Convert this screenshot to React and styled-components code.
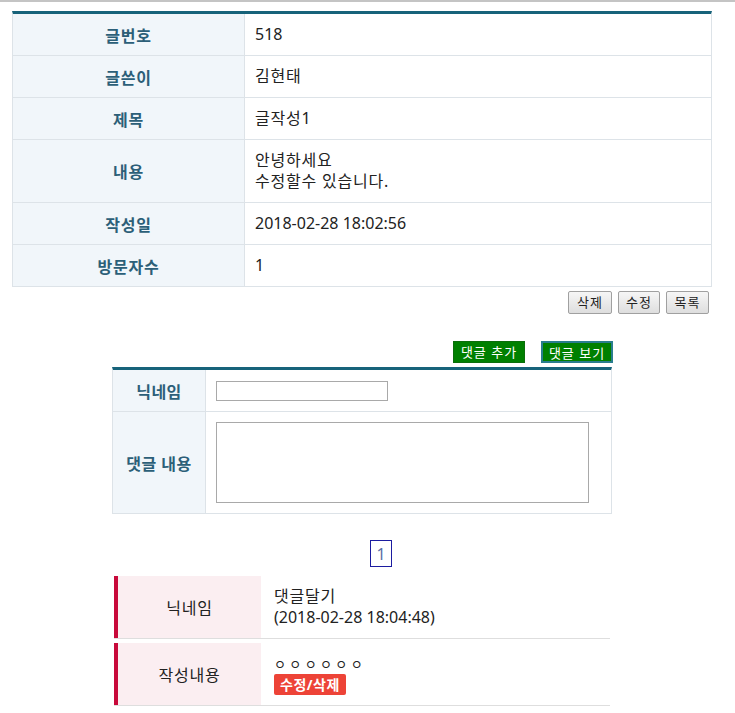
import React from 'react';
import styled, { createGlobalStyle } from 'styled-components';

const GlobalStyle = createGlobalStyle`
    body {
        margin: 0;
        background: #ffffff;
        font-family: "Noto Sans", "Noto Sans CJK KR", sans-serif;
        color: #222222;
    }
    button, input, textarea {
        font-family: "Noto Sans", "Noto Sans CJK KR", sans-serif;
    }
`;

const post = [
    { label: '글번호', value: '518' },
    { label: '글쓴이', value: '김현태', ko: true },
    { label: '제목', value: '글작성1', ko: true },
    { label: '내용', value: ['안녕하세요', '수정할수 있습니다.'], tall: true, ko: true },
    { label: '작성일', value: '2018-02-28 18:02:56' },
    { label: '방문자수', value: '1' },
];

const App = () => {
    return (
        <>
            <GlobalStyle />
            <TopLine />
            <StWrapper>
                <DetailTable>
                    {post.map((row) => (
                        <DetailRow key={row.label} $tall={row.tall}>
                            <LabelCell>{row.label}</LabelCell>
                            <ValueCell $ko={row.ko}>
                                {Array.isArray(row.value)
                                    ? row.value.map((line) => <div key={line}>{line}</div>)
                                    : row.value}
                            </ValueCell>
                        </DetailRow>
                    ))}
                </DetailTable>

                <ButtonRow>
                    <GrayButton $w={44}>삭제</GrayButton>
                    <GrayButton $w={42}>수정</GrayButton>
                    <GrayButton $w={43}>목록</GrayButton>
                </ButtonRow>

                <CommentSection>
                    <GreenRow>
                        <GreenButton>댓글 추가</GreenButton>
                        <GreenButton $active>댓글 보기</GreenButton>
                    </GreenRow>
                    <FormTable>
                        <FormRow $h={42}>
                            <FormLabel>닉네임</FormLabel>
                            <FormValue>
                                <NickInput />
                            </FormValue>
                        </FormRow>
                        <FormRow $h={102}>
                            <FormLabel>댓글 내용</FormLabel>
                            <FormValue>
                                <ContentArea />
                            </FormValue>
                        </FormRow>
                    </FormTable>

                    <Paging>
                        <PageBox>1</PageBox>
                    </Paging>

                    <CommentList>
                        <CommentRow>
                            <CommentLabel>닉네임</CommentLabel>
                            <CommentValue>
                                <KoLine>댓글달기</KoLine>
                                <div>(2018-02-28 18:04:48)</div>
                            </CommentValue>
                        </CommentRow>
                        <CommentRow>
                            <CommentLabel>작성내용</CommentLabel>
                            <CommentValue>
                                <Circles>ㅇ ㅇ ㅇ ㅇ ㅇ ㅇ</Circles>
                                <RedBadge>수정/삭제</RedBadge>
                            </CommentValue>
                        </CommentRow>
                    </CommentList>
                </CommentSection>
            </StWrapper>
        </>
    );
};

export default App;

const TopLine = styled.div`
    height: 2px;
    background: #c4c4c4;
`;

const StWrapper = styled.div`
    padding: 9px 0 0 12px;
`;

const DetailTable = styled.div`
    width: 700px;
    box-sizing: border-box;
    border-top: 3px solid #17637a;
    border-left: 1px solid #dde3e8;
    border-right: 1px solid #dde3e8;
`;

const DetailRow = styled.div`
    display: grid;
    grid-template-columns: 232px 1fr;
    height: ${({ $tall }) => ($tall ? '63px' : '42px')};
    box-sizing: border-box;
    border-bottom: 1px solid #dde3e8;
`;

const LabelCell = styled.div`
    display: flex;
    align-items: center;
    justify-content: center;
    background: #f1f6fa;
    border-right: 1px solid #dde3e8;
    font-size: 16px;
    font-weight: 700;
    letter-spacing: 0.8px;
    color: #2c5f78;
`;

const ValueCell = styled.div`
    display: flex;
    flex-direction: column;
    justify-content: center;
    padding-left: 10px;
    font-size: 16px;
    line-height: 21px;
    letter-spacing: ${({ $ko }) => ($ko ? '0.8px' : '0')};
    color: #222222;
`;

const ButtonRow = styled.div`
    width: 697px;
    display: flex;
    justify-content: flex-end;
    gap: 6px;
    margin-top: 4px;
`;

const GrayButton = styled.button`
    width: ${({ $w }) => $w}px;
    height: 23px;
    padding: 0;
    font-size: 13px;
    letter-spacing: 1px;
    line-height: 21px;
    color: #222;
    background: linear-gradient(#f6f6f6, #dedede);
    border: 1px solid #a0a0a0;
    border-radius: 2px;
`;

const CommentSection = styled.div`
    margin-left: 100px;
    width: 500px;
`;

const GreenRow = styled.div`
    display: flex;
    justify-content: flex-end;
    gap: 16px;
    margin-top: 27px;
    margin-right: -1px;
`;

const GreenButton = styled.button`
    width: 72px;
    height: 22px;
    padding: 0;
    font-size: 13px;
    letter-spacing: 1px;
    line-height: 20px;
    color: #ffffff;
    background: #008000;
    border: ${({ $active }) => ($active ? '2px solid #2a7d8e' : '1px solid #0b6e0b')};
`;

const FormTable = styled.div`
    margin-top: 4px;
    box-sizing: border-box;
    border-top: 3px solid #17637a;
    border-left: 1px solid #dde3e8;
    border-right: 1px solid #dde3e8;
`;

const FormRow = styled.div`
    display: grid;
    grid-template-columns: 93px 1fr;
    height: ${({ $h }) => $h}px;
    box-sizing: border-box;
    border-bottom: 1px solid #dde3e8;
`;

const FormLabel = styled(LabelCell)`
    letter-spacing: 0.5px;
`;

const FormValue = styled.div`
    display: flex;
    align-items: center;
    padding-left: 10px;
`;

const NickInput = styled.input`
    width: 172px;
    height: 20px;
    box-sizing: border-box;
    border: 1px solid #a9a9a9;
    padding: 0;
`;

const ContentArea = styled.textarea`
    width: 373px;
    height: 81px;
    box-sizing: border-box;
    border: 1px solid #a9a9a9;
    resize: none;
    padding: 0;
`;

const Paging = styled.div`
    display: flex;
    padding-left: 258px;
    margin-top: 26px;
`;

const PageBox = styled.div`
    width: 22px;
    height: 27px;
    box-sizing: border-box;
    border: 1px solid #1c1ca0;
    display: flex;
    align-items: center;
    justify-content: center;
    font-size: 16px;
    color: #5a6fa8;
`;

const CommentList = styled.div`
    margin-top: 9px;
    margin-left: 2px;
    width: 496px;
    display: flex;
    flex-direction: column;
    gap: 4px;
`;

const CommentRow = styled.div`
    display: grid;
    grid-template-columns: 147px 1fr;
    column-gap: 1px;
    height: 63px;
    box-sizing: border-box;
    border-bottom: 1px solid #dedede;
`;

const CommentLabel = styled.div`
    display: flex;
    align-items: center;
    justify-content: center;
    background: #fbeef1;
    border-left: 4px solid #c8093a;
    font-size: 16px;
    letter-spacing: 0.8px;
    color: #222;
`;

const CommentValue = styled.div`
    display: flex;
    flex-direction: column;
    justify-content: center;
    padding-left: 12px;
    font-size: 16px;
    line-height: 21px;
    color: #222;
`;

const KoLine = styled.div`
    letter-spacing: 0.8px;
`;

const Circles = styled.div`
    font-size: 13px;
    line-height: 20px;
`;

const RedBadge = styled.span`
    align-self: flex-start;
    background: #ed4337;
    color: #ffffff;
    font-size: 14px;
    font-weight: 700;
    letter-spacing: 0.5px;
    line-height: 21px;
    padding: 0 6px;
    border-radius: 2px;
`;
